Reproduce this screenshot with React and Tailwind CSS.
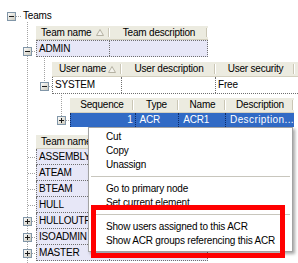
import React from "react";

function Tri() {
  return (
    <svg width="8" height="7" viewBox="0 0 8 7" className="shrink-0">
      <polygon points="0.5,6.5 4,0.5 7.5,6.5" fill="#f3f2ec" stroke="#b4b1a2" />
    </svg>
  );
}

function HCell({ w, children, align, sort }) {
  return (
    <div className={`relative flex h-full items-center ${w} ${align}`}>
      <span className="whitespace-nowrap">{children}</span>
      {sort ? <span className="ml-auto mr-[6px] flex items-center"><Tri /></span> : null}
      <div className="absolute right-0 top-[2px] bottom-[2px] w-[2px] border-l border-r border-l-[#cac6b5] border-r-white" />
    </div>
  );
}

function Exp({ x, y, plus }) {
  return (
    <g transform={`translate(${x + 0.5},${y + 0.5})`}>
      <rect width="8" height="8" fill="url(#eg)" stroke="#8196a8" />
      <line x1="1.5" y1="4" x2="6.5" y2="4" stroke="#1a1a1a" />
      {plus ? <line x1="4" y1="1.5" x2="4" y2="6.5" stroke="#1a1a1a" /> : null}
    </g>
  );
}

const teams = ["ASSEMBLY", "ATEAM", "BTEAM", "HULL", "HULLOUTFITTING", "ISOADMIN", "MASTER"];

export default function App() {
  const dot = { stroke: "#a3a3a3", strokeDasharray: "1 1" };
  return (
    <div className="relative w-[298px] h-[263px] overflow-hidden bg-white font-['Liberation_Sans',Arial,sans-serif] text-[10px] tracking-[-0.2px] leading-none text-black">
      <svg className="absolute left-0 top-0" width="298" height="263">
        <defs>
          <linearGradient id="eg" x1="0" y1="0" x2="1" y2="1">
            <stop offset="0" stopColor="#ffffff" />
            <stop offset="1" stopColor="#c9c6b8" />
          </linearGradient>
        </defs>
        <line x1="16" y1="16.5" x2="22" y2="16.5" {...dot} />
        <line x1="27.5" y1="22" x2="27.5" y2="263" {...dot} />
        <line x1="32" y1="51.5" x2="36" y2="51.5" {...dot} />
        <line x1="44.5" y1="58" x2="44.5" y2="82" {...dot} />
        <line x1="49" y1="86.5" x2="52" y2="86.5" {...dot} />
        <line x1="61.5" y1="95" x2="61.5" y2="116" {...dot} />
        <line x1="66" y1="120.5" x2="70" y2="120.5" {...dot} />
        <line x1="28" y1="157.5" x2="36" y2="157.5" {...dot} />
        <line x1="28" y1="173.5" x2="36" y2="173.5" {...dot} />
        <line x1="28" y1="189.5" x2="36" y2="189.5" {...dot} />
        <line x1="28" y1="205.5" x2="36" y2="205.5" {...dot} />
        <line x1="32" y1="221.5" x2="36" y2="221.5" {...dot} />
        <line x1="32" y1="237.5" x2="36" y2="237.5" {...dot} />
        <line x1="32" y1="253.5" x2="36" y2="253.5" {...dot} />
        <Exp x={7} y={12} />
        <Exp x={23} y={47} />
        <Exp x={40} y={82} />
        <Exp x={57} y={116} plus />
        <Exp x={23} y={217} plus />
        <Exp x={23} y={233} plus />
        <Exp x={23} y={249} plus />
      </svg>

      <div className="relative pt-[8px]">
        <div className="flex h-[16px] items-center pl-[23px]">Teams</div>

        {/* Team grid 1 */}
        <div className="mt-[2px] ml-[36px] w-[172px]">
          <div className="flex h-[14px] bg-[#ecebe0] border-b border-[#d4d0bf]">
            <HCell w="w-[74px] pl-[5px]" sort>Team name</HCell>
            <HCell w="w-[98px] justify-center">Team description</HCell>
          </div>
          <div className="flex h-[17px] bg-[#e7e7f7] border border-dotted border-[#6f6f6f]">
            <div className="flex w-[73px] items-center pl-[2px] border-r border-dotted border-[#6f6f6f]">ADMIN</div>
            <div className="flex-1" />
          </div>
        </div>

        {/* User grid */}
        <div className="mt-[5px] ml-[52px] w-[260px]">
          <div className="flex h-[15px] bg-[#ecebe0] border-b border-[#d4d0bf]">
            <HCell w="w-[70px] pl-[7px]" sort>User name</HCell>
            <HCell w="w-[94px] justify-center">User description</HCell>
            <HCell w="w-[79px] justify-center">User security</HCell>
            <div className="flex-1" />
          </div>
          <div className="flex h-[17px] bg-white border-b border-l border-dotted border-[#6f6f6f]">
            <div className="flex w-[69px] items-center pl-[2px] border-r border-dotted border-[#6f6f6f]">SYSTEM</div>
            <div className="w-[94px] border-r border-dotted border-[#6f6f6f]" />
            <div className="flex w-[79px] items-center pl-[2px]">Free</div>
          </div>
        </div>

        {/* ACR grid */}
        <div className="mt-[4px] ml-[70px] w-[224px]">
          <div className="flex h-[15px] bg-[#ecebe0] border-b border-[#d4d0bf]">
            <HCell w="w-[64px] justify-center">Sequence</HCell>
            <HCell w="w-[45px] justify-center">Type</HCell>
            <HCell w="w-[47px] justify-center">Name</HCell>
            <HCell w="w-[68px] justify-center">Description</HCell>
          </div>
          <div className="flex h-[14px] bg-[#316ac5] text-white border-l border-dotted border-[#0d2a66]">
            <div className="flex w-[65px] items-center justify-end pr-[2px] border-r border-dotted border-[#0d2a66]">1</div>
            <div className="flex w-[44px] items-center pl-[4px] border-r border-dotted border-[#0d2a66]">ACR</div>
            <div className="flex w-[47px] items-center pl-[4px] border-r border-dotted border-[#0d2a66]">ACR1</div>
            <div className="flex flex-1 items-center pl-[4px] tracking-[0.4px]">Description...</div>
          </div>
        </div>

        {/* Team grid 2 */}
        <div className="mt-[8px] ml-[36px] w-[172px]">
          <div className="flex h-[14px] bg-[#ecebe0] border-b border-[#d4d0bf]">
            <HCell w="w-[74px] pl-[5px]" sort>Team name</HCell>
            <HCell w="w-[98px] justify-center">Team description</HCell>
          </div>
          {teams.map((t) => (
            <div key={t} className="flex h-[16px] bg-[#e7e7f7] border-l border-r border-b border-dotted border-[#6f6f6f]">
              <div className="flex w-[73px] items-center overflow-hidden whitespace-nowrap pl-[2px] border-r border-dotted border-[#6f6f6f]">{t}</div>
              <div className="flex-1" />
            </div>
          ))}
        </div>
      </div>

      {/* Context menu */}
      <div className="absolute left-[88px] top-[127px] w-[205px] h-[125px] bg-white border border-[#a3a3a3] shadow-[2px_2px_3px_rgba(0,0,0,0.35)] pt-[2px]">
        <div className="flex h-[14px] items-center pl-[17px]">Cut</div>
        <div className="flex h-[14px] items-center pl-[17px]">Copy</div>
        <div className="flex h-[14px] items-center pl-[17px]">Unassign</div>
        <div className="mx-[2px] mt-[4px] mb-[5px] h-px bg-[#c8c6bd]" />
        <div className="flex h-[14px] items-center pl-[17px]">Go to primary node</div>
        <div className="flex h-[14px] items-center pl-[17px]">Set current element</div>
        <div className="mx-[2px] mt-[4px] mb-[5px] h-px bg-[#c8c6bd]" />
        <div className="flex h-[14px] items-center pl-[17px]">Show users assigned to this ACR</div>
        <div className="flex h-[14px] items-center pl-[17px]">Show ACR groups referencing this ACR</div>
      </div>

      {/* Highlight box */}
      <div className="absolute left-[91px] top-[205px] w-[194px] h-[53px] border-[5px] border-[#ff0000]" />
    </div>
  );
}
